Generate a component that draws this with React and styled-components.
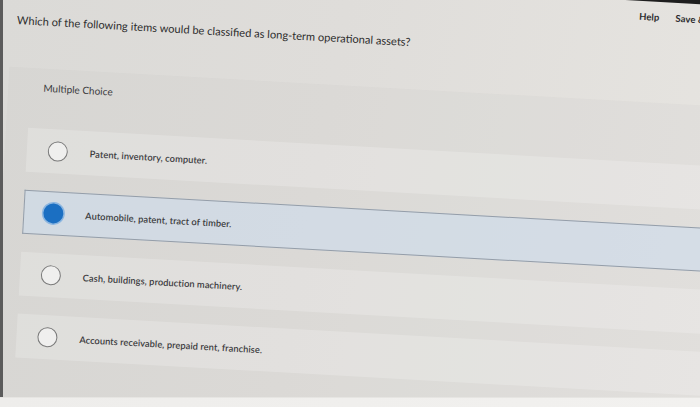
import React from "react";
import styled, { createGlobalStyle } from "styled-components";

const Global = createGlobalStyle`
  html, body { margin: 0; padding: 0; }
  body {
    width: 700px;
    height: 407px;
    overflow: hidden;
    background: #efeeec;
    font-family: "Lato", "Liberation Sans", sans-serif;
  }
`;

const Page = styled.div`
  width: 700px;
  height: 407px;
  display: flex;
  flex-direction: column;
  overflow: hidden;
`;

const Viewport = styled.div`
  flex: 1;
  overflow: hidden;
  border-left: 3px solid #5b5b5b;
  background: linear-gradient(100deg, #dbdad7 0%, #dfdddA 45%, #e6e4e0 100%);
`;

const BottomStrip = styled.div`
  height: 9px;
  background: linear-gradient(90deg, #eeedeb, #f2f1ef);
  border-top: 1px solid #e6e5e2;
`;

const Scene = styled.div`
  width: 760px;
  transform-origin: 0 0;
  transform: translate(-0.8px, -71.9px) rotate(3.2deg);
  display: flex;
  flex-direction: column;
`;

const TopBar = styled.div`
  height: 37px;
  background: #1e1e1e;
`;

const Toolbar = styled.div`
  height: 31px;
  display: flex;
  align-items: center;
  justify-content: flex-end;
  gap: 16px;
  padding-right: 34px;
`;

const ToolLink = styled.span`
  font-size: 9.5px;
  font-weight: 700;
  color: #2c2c2e;
  letter-spacing: 0.1px;
`;

const Question = styled.div`
  padding: 15px 0 0 20px;
  font-size: 11.1px;
  line-height: 16px;
  color: #2e2e2e;
`;

const Panel = styled.section`
  margin: 39px 0 0 15px;
  padding: 12px 0 200px 0;
  background: rgba(95, 90, 85, 0.03);
`;

const PanelLabel = styled.div`
  padding-left: 35px;
  font-size: 10px;
  line-height: 14px;
  color: #3a3a3c;
`;

const Options = styled.div`
  margin: 34px 0 0 22px;
  display: flex;
  flex-direction: column;
  gap: 18px;
`;

const Row = styled.div`
  height: 44px;
  box-sizing: border-box;
  display: flex;
  align-items: center;
  gap: 22px;
  padding-left: ${(p) => (p.$selected ? 19 : 20)}px;
  background: ${(p) =>
    p.$selected ? "rgba(205, 220, 236, 0.6)" : "rgba(255, 255, 255, 0.2)"};
  border: ${(p) => (p.$selected ? "1px solid #949da8" : "1px solid transparent")};
  border-right: none;
`;

const Radio = styled.span`
  flex: none;
  width: 20px;
  height: 20px;
  box-sizing: border-box;
  border-radius: 50%;
  border: ${(p) => (p.$checked ? "none" : "1.5px solid #7a7a7a")};
  background: ${(p) => (p.$checked ? "#1b6fc2" : "rgba(255,255,255,0.5)")};
  box-shadow: ${(p) => (p.$checked ? "0 0 0 1.5px #8cb6e0" : "none")};
`;

const OptionText = styled.span`
  font-size: 9.3px;
  font-weight: 600;
  color: #3a3a3c;
  letter-spacing: 0.05px;
`;

const options = [
  "Patent, inventory, computer.",
  "Automobile, patent, tract of timber.",
  "Cash, buildings, production machinery.",
  "Accounts receivable, prepaid rent, franchise.",
];

export default function App() {
  const selected = 1;
  return (
    <>
      <Global />
      <Page>
        <Viewport>
          <Scene>
            <TopBar />
            <Toolbar>
              <ToolLink>Help</ToolLink>
              <ToolLink>Save &amp; Exit</ToolLink>
            </Toolbar>
            <Question>
              Which of the following items would be classified as long-term operational assets?
            </Question>
            <Panel>
              <PanelLabel>Multiple Choice</PanelLabel>
              <Options>
                {options.map((o, i) => (
                  <Row key={o} $selected={i === selected}>
                    <Radio $checked={i === selected} />
                    <OptionText>{o}</OptionText>
                  </Row>
                ))}
              </Options>
            </Panel>
          </Scene>
        </Viewport>
        <BottomStrip />
      </Page>
    </>
  );
}
